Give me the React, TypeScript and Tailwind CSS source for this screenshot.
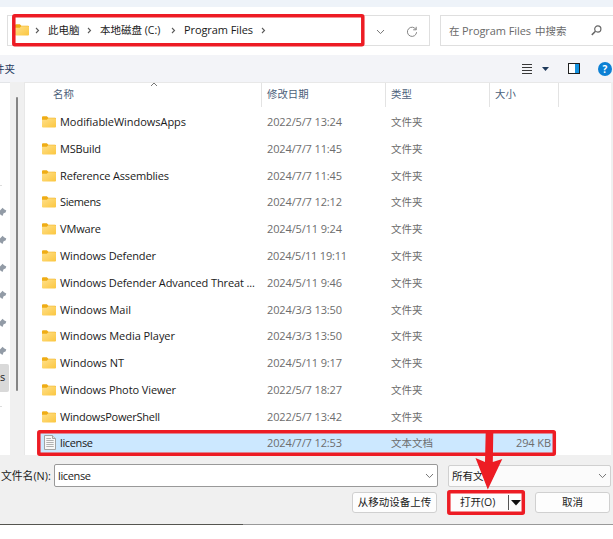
import { ReactNode } from 'react'

interface FileRow {
  name: string
  date: string
  width: string
}

const folders: FileRow[] = [
  { name: 'ModifiableWindowsApps', date: '2022/5/7 13:24', width: '126' },
  { name: 'MSBuild', date: '2024/7/7 11:45', width: '41' },
  { name: 'Reference Assemblies', date: '2024/7/7 11:45', width: '109' },
  { name: 'Siemens', date: '2024/7/7 12:12', width: '41' },
  { name: 'VMware', date: '2024/5/11 9:24', width: '41' },
  { name: 'Windows Defender', date: '2024/5/11 19:11', width: '96' },
  { name: 'Windows Defender Advanced Threat ...', date: '2024/5/11 9:46', width: '195' },
  { name: 'Windows Mail', date: '2024/3/3 13:50', width: '71' },
  { name: 'Windows Media Player', date: '2024/3/3 13:50', width: '115' },
  { name: 'Windows NT', date: '2024/5/11 9:17', width: '64' },
  { name: 'Windows Photo Viewer', date: '2022/5/7 18:27', width: '116' },
  { name: 'WindowsPowerShell', date: '2022/5/7 13:42', width: '100' },
]

const pins = [0, 1, 2, 3, 4, 5]

const watermarks = [17, 140, 263, 386, 509].flatMap((y) =>
  [-108, 15, 138, 261, 384, 507].map((x) => ({ x, y })),
)

const FolderIcon = () => (
  <svg width="14" height="12" viewBox="0 0 14 12" className="block shrink-0">
    <defs>
      <linearGradient id="folder" x1="0" y1="0" x2="1" y2="1">
        <stop offset="0" stopColor="#ffe08a" />
        <stop offset="1" stopColor="#fbc63f" />
      </linearGradient>
    </defs>
    <path d="M0 1.2Q0 .2 1 .2H4.8L6.4 1.7H13Q14 1.7 14 2.7V6H0Z" fill="#efad16" />
    <path d="M0 3.8H4.8L6.3 2.3H13Q14 2.3 14 3.3V10.8Q14 11.6 13 11.6H1Q0 11.6 0 10.8Z" fill="url(#folder)" />
  </svg>
)

const FileIcon = () => (
  <svg width="12" height="15" viewBox="0 0 12 15" className="block shrink-0">
    <path d="M.5 .5H8.5L11.5 3.5V14.5H.5Z" fill="#f8f8f8" stroke="#a3a3a3" />
    <path d="M8.5 .5V3.5H11.5" fill="#ddd" stroke="#a3a3a3" />
    <path d="M2.3 3.5H7M2.3 5.5H9.7M2.3 7.5H9.7M2.3 9.5H9.7M2.3 11.5H9.7" stroke="#a8a8a8" strokeWidth=".9" />
  </svg>
)

const Pin = () => (
  <svg width="7" height="10" viewBox="0 0 7 10" className="block">
    <path d="M0 3.6L2.6 .8L4 2.2L6.3 3.6L5.5 5.6L3.6 6.2L2.5 9L0 7.2Z" fill="#929ba6" />
  </svg>
)

const Chevron = ({ className = '' }: { className?: string }) => (
  <svg width="5" height="7" viewBox="0 0 5 7" className={`block shrink-0 ${className}`}>
    <path d="M1 1L3.5 3.5L1 6" fill="none" stroke="#5a5a5a" strokeWidth="1.1" />
  </svg>
)

const DownChevron = () => (
  <svg width="9" height="6" viewBox="0 0 9 6" className="block shrink-0">
    <path d="M1 1L4.5 4.6L8 1" fill="none" stroke="#777" />
  </svg>
)

// Latin labels are justified to the advance widths of the native dialog font
const Latin = ({ width, children }: { width: string; children: string }) => (
  <svg width={width} height="16" className="block shrink-0 overflow-visible">
    <text x="0" y="12" fontSize="11" fill="currentColor" textLength={width} lengthAdjust="spacing">
      {children}
    </text>
  </svg>
)

const HeadCell = ({ className, children }: { className: string; children?: ReactNode }) => (
  <div className={`flex h-6 shrink-0 items-center border-r border-[#e3e3e3] pb-[2px] text-[10.4px] text-[#4c607a] ${className}`}>
    {children}
  </div>
)

export default function App() {
  return (
    <div className="relative flex h-[539px] w-[613px] flex-col overflow-hidden bg-white font-['Open_Sans','Noto_Sans_CJK_SC',sans-serif] text-[11px] leading-4 whitespace-nowrap text-[#1a1a1a]">
      {/* Window edge */}
      <div className="h-[7px] shrink-0 bg-[#eef3f9]" />

      {/* Address and search */}
      <div className="flex h-12 shrink-0 items-start pt-2 pl-[7px]">
        <div className="flex h-[31px] w-[423px] shrink-0 items-center border border-[#dfdfdf] pb-px pl-[7px]">
          <FolderIcon />
          <Chevron className="ml-[6px]" />
          <span className="ml-2 w-8 text-[10.5px]">此电脑</span>
          <Chevron className="ml-[7px]" />
          <span className="ml-2 w-[61px] text-[10.5px]">本地磁盘 (C:)</span>
          <Chevron className="ml-[10px]" />
          <span className="ml-2">
            <Latin width="69">Program Files</Latin>
          </span>
          <Chevron className="ml-2" />
          <span className="mt-[3px] ml-[110px]">
            <DownChevron />
          </span>
          <svg width="12" height="12" viewBox="0 0 12 12" className="mt-[3px] ml-[21px] block">
            <path d="M10 3.5A4.6 4.6 0 1 0 10.6 6.2M10.2 .8V3.8H7.2" fill="none" stroke="#858585" />
          </svg>
        </div>
        <div className="ml-[10px] flex h-[31px] w-[190px] shrink-0 items-center border border-[#dfdfdf] pl-2 text-[#6a6a6a]">
          <span className="w-[10px] text-[10.5px]">在</span>
          <span className="ml-[3px]">
            <Latin width="69">Program Files</Latin>
          </span>
          <span className="ml-1 w-8 text-[10.5px]">中搜索</span>
          <svg width="11" height="11" viewBox="0 0 11 11" className="ml-[24px] block">
            <circle cx="6.8" cy="4" r="3.1" fill="none" stroke="#666" strokeWidth="1.2" />
            <path d="M4.5 6.3L.8 9.9" stroke="#666" strokeWidth="1.5" />
          </svg>
        </div>
      </div>

      {/* Toolbar */}
      <div className="flex h-[27px] shrink-0 items-center bg-[#f3f4f8]">
        <span className="-ml-[6px] w-[528px] text-[10.5px] text-[#1f3a5f]">件夹</span>
        <svg width="10" height="10" viewBox="0 0 10 10" className="block shrink-0">
          <path d="M0 .5H10M0 3.5H10M0 6.5H10M0 9.5H10" stroke="#383838" />
        </svg>
        <svg width="7" height="4" viewBox="0 0 7 4" className="ml-[10px] block shrink-0">
          <path d="M0 0H7L3.5 4Z" fill="#1e395b" />
        </svg>
        <svg width="12" height="11" viewBox="0 0 12 11" className="ml-[19px] block shrink-0">
          <rect x=".5" y=".5" width="11" height="10" fill="#fff" stroke="#202020" />
          <path d="M7 1H11V10H7Z" fill="#1492df" />
        </svg>
        <span className="ml-[18px] flex size-[14px] shrink-0 items-center justify-center rounded-full bg-[#0c80d4] text-[10px] leading-none font-bold text-white">
          ?
        </span>
      </div>

      {/* Navigation pane and file list */}
      <div className="flex h-[373px] shrink-0">
        <div className="flex w-[10px] shrink-0 flex-col border-t border-[#e3e5e8]">
          <div className="mt-[102px] h-px w-[2px] bg-[#ddd]" />
          <div className="mt-[21px] flex flex-col gap-[17.8px]">
            {pins.map((p) => (
              <Pin key={p} />
            ))}
          </div>
          <div className="mt-[8px] flex h-7 w-[9px] items-center rounded-r-[2px] bg-[#d9d9d9] pb-px text-[11px]">s</div>
          <div className="mt-[14px] h-px w-[2px] bg-[#ddd]" />
        </div>
        <div className="flex w-[14px] shrink-0 justify-center bg-[#f0f0f0]">
          <div className="mt-[15px] h-[294px] w-[2px] rounded-full bg-[#858585]" />
        </div>
        <div className="flex w-[587px] shrink-0 flex-col border-t border-l border-[#e8e8e8]">
          <div className="relative flex h-[25.6px] shrink-0">
            <HeadCell className="w-[237px] pl-7">名称</HeadCell>
            <HeadCell className="w-[124px] pl-[5px]">修改日期</HeadCell>
            <HeadCell className="w-[104px] pl-[5px]">类型</HeadCell>
            <HeadCell className="w-[69px] pl-[5px]">大小</HeadCell>
            <svg width="8" height="5" viewBox="0 0 8 5" className="absolute -top-px left-[125px]">
              <path d="M1 4L4 1L7 4" fill="none" stroke="#777" />
            </svg>
          </div>
          {folders.map((f) => (
            <div key={f.name} className="flex h-[26.8px] shrink-0 items-center pl-[17px]">
              <FolderIcon />
              <span className="ml-1 w-[207px]">
                <Latin width={f.width}>{f.name}</Latin>
              </span>
              <span className="w-[124px] text-[#6d6d6d]">
                <Latin width={f.date.length === 15 ? '80' : '75'}>{f.date}</Latin>
              </span>
              <span className="text-[10.5px] text-[#6d6d6d]">文件夹</span>
            </div>
          ))}
          <div className="ml-[14px] flex h-[25px] w-[514px] shrink-0 items-center bg-[#cce8ff] pl-[5px]">
            <FileIcon />
            <span className="ml-1 w-[207px]">
              <Latin width="33">license</Latin>
            </span>
            <span className="w-[124px] text-[#6d6d6d]">
              <Latin width="75">2024/7/7 12:53</Latin>
            </span>
            <span className="w-[125px] text-[10.5px] text-[#6d6d6d]">文本文档</span>
            <span className="text-[#6d6d6d]">
              <Latin width="35">294 KB</Latin>
            </span>
          </div>
        </div>
        <div className="w-[2px] bg-[#f0f0f0]" />
      </div>

      {/* File name and actions */}
      <div className="flex h-[69px] shrink-0 flex-col bg-[#f0f0f0] pt-[9px]">
        <div className="flex h-[23px] items-center pl-px">
          <span className="w-[53px] text-[10.8px]">文件名(N):</span>
          <div className="flex h-[23px] w-[384px] items-center justify-between rounded-[2px] border border-[#999] bg-white pr-[3px] pl-[3px]">
            <Latin width="33">license</Latin>
            <DownChevron />
          </div>
          <div className="ml-[10px] flex h-[22px] w-[163px] items-center justify-between rounded-[2px] border border-[#d0d0d0] bg-[#fbfbfb] pr-[3px] pl-[3px] text-[10.5px]">
            所有文件
            <DownChevron />
          </div>
        </div>
        <div className="mt-[5px] flex h-[21px] pl-[352px] text-[10.5px]">
          <div className="flex w-[85px] items-center justify-center rounded-[3px] border border-[#d0d0d0] bg-[#fdfdfd] pb-px">
            从移动设备上传
          </div>
          <div className="ml-[12px] flex w-[74px] items-center bg-[#fdfdfd]">
            <span className="ml-[11px] w-[48px] pb-px">打开(O)</span>
            <span className="h-[15px] w-px bg-[#555]" />
            <svg width="10" height="6" viewBox="0 0 10 6" className="ml-[2px] block">
              <path d="M0 0H10L5 5.5Z" fill="#111" />
            </svg>
          </div>
          <div className="ml-[12px] flex w-[75px] items-center justify-center rounded-[3px] border border-[#d0d0d0] bg-[#fdfdfd] pb-px">
            取消
          </div>
        </div>
      </div>
      <div className="flex h-px shrink-0">
        <div className="w-[243px] bg-[#555550]" />
        <div className="grow bg-[#999]" />
      </div>

      {/* Watermark and red callouts lie over the dialog */}
      <svg width="613" height="525" className="pointer-events-none absolute top-0 left-0">
        <g
          fill="none"
          stroke="#000"
          strokeOpacity=".024"
          strokeWidth="2"
          fontSize="19"
          fontWeight="bold"
          fontStyle="italic"
        >
          {watermarks.map(({ x, y }) => (
            <text key={`${x}-${y}`} transform={`translate(${x} ${y + 13}) rotate(20)`} textLength="119">
              r jctx. com
            </text>
          ))}
        </g>
        <g fill="none" stroke="#ed1c24" strokeWidth="3.5">
          <rect x="13.8" y="15.8" width="349" height="29" rx="1" />
          <rect x="38.8" y="431.8" width="515.5" height="22.5" rx="1" />
          <rect x="448.8" y="491.8" width="74.5" height="21.5" rx="1" />
        </g>
        <path d="M485.7 432H493.3L492.8 462L502.3 459L487.8 489.5L475.5 458L485 462Z" fill="#ed1c24" />
      </svg>
    </div>
  )
}
